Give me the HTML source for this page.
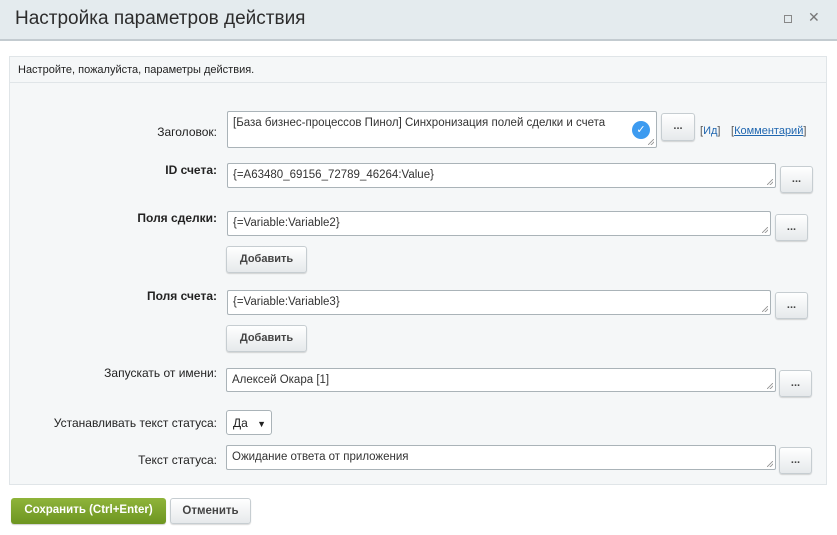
<!DOCTYPE html><html><head><meta charset="utf-8"><style>
*{box-sizing:border-box}
body{margin:0;width:837px;height:535px;background:#fff;font-family:"Liberation Sans",sans-serif;font-size:12px;color:#333;position:relative;overflow:hidden}
.a{position:absolute}
.hd{left:0;top:0;width:837px;height:41px;background:#e4ebee;border-bottom:2px solid #c3cbd0}
.ttl{left:15px;top:8px;font-size:19px;color:#2c2c2c}
.panel{left:9px;top:56px;width:818px;height:429px;background:#f5f7f8;border:1px solid #e0e5e8}
.intro{left:9px;top:56px;width:818px;height:27px;border-bottom:1px solid #e0e5e8;padding:8px 0 0 9px;font-size:11px;color:#222}
.ta{background:#fff;border:1px solid #aab3b8;border-radius:2px;padding:5px 5px;font-size:11.5px;color:#333}
.ta:after{content:"";position:absolute;right:2px;bottom:2px;width:6px;height:6px;background:linear-gradient(135deg,transparent 45%,#999 46%,#999 54%,transparent 55%,transparent 70%,#999 71%,#999 79%,transparent 80%)}
.btn{background:linear-gradient(#fff,#e6e9eb);border:1px solid #c6cdd1;border-radius:3px;box-shadow:0 1px 1px rgba(0,0,0,.15);text-align:center;font-size:11px;font-weight:bold;color:#444}
.lb{width:217px;left:0;text-align:right;font-size:12px;color:#222}
.b{font-weight:bold}
a{color:#2067b0}
</style></head><body>
<div class="a hd"></div>
<div class="a ttl">Настройка параметров действия</div>
<div class="a" style="left:784px;top:15px;width:8px;height:8px;border:1px solid #888"></div>
<div class="a" style="left:808px;top:9px;font-size:14px;color:#777">✕</div>
<div class="a panel"></div>
<div class="a intro">Настройте, пожалуйста, параметры действия.</div>

<div class="a lb" style="top:125px">Заголовок:</div>
<div class="a ta" style="left:227px;top:111px;width:430px;height:37px">[База бизнес-процессов Пинол] Синхронизация полей сделки и счета</div>
<div class="a" style="left:632px;top:121px;width:18px;height:18px;border-radius:50%;background:#3d9bf0;color:#fff;font-size:11px;text-align:center;line-height:18px">✓</div>
<div class="a btn" style="left:661px;top:113px;width:34px;height:28px;line-height:24px">...</div>
<div class="a" style="left:700px;top:125px;font-size:11px;color:#555">[<a>Ид</a>]</div>
<div class="a" style="left:731px;top:125px;font-size:11px;color:#555">[<a style="text-decoration:underline">Комментарий</a>]</div>

<div class="a lb b" style="top:163px">ID счета:</div>
<div class="a ta" style="left:227px;top:163px;width:549px;height:25px">{=A63480_69156_72789_46264:Value}</div>
<div class="a btn" style="left:780px;top:166px;width:33px;height:27px;line-height:24px">...</div>

<div class="a lb b" style="top:211px">Поля сделки:</div>
<div class="a ta" style="left:227px;top:211px;width:544px;height:25px">{=Variable:Variable2}</div>
<div class="a btn" style="left:775px;top:214px;width:33px;height:27px;line-height:24px">...</div>
<div class="a btn" style="left:226px;top:246px;width:81px;height:27px;line-height:25px">Добавить</div>

<div class="a lb b" style="top:289px">Поля счета:</div>
<div class="a ta" style="left:227px;top:290px;width:544px;height:25px">{=Variable:Variable3}</div>
<div class="a btn" style="left:775px;top:292px;width:33px;height:27px;line-height:24px">...</div>
<div class="a btn" style="left:226px;top:325px;width:81px;height:27px;line-height:25px">Добавить</div>

<div class="a lb" style="top:366px">Запускать от имени:</div>
<div class="a ta" style="left:226px;top:368px;width:550px;height:24px">Алексей Окара [1]</div>
<div class="a btn" style="left:779px;top:370px;width:33px;height:27px;line-height:24px">...</div>

<div class="a lb" style="top:416px">Устанавливать текст статуса:</div>
<div class="a" style="left:226px;top:410px;width:46px;height:25px;background:#fff;border:1px solid #aab3b8;border-radius:3px;padding:5px 0 0 6px;font-size:12px;color:#222">Да <span style="font-size:9px;margin-left:6px">▼</span></div>

<div class="a lb" style="top:453px">Текст статуса:</div>
<div class="a ta" style="left:226px;top:445px;width:550px;height:25px">Ожидание ответа от приложения</div>
<div class="a btn" style="left:779px;top:447px;width:33px;height:27px;line-height:24px">...</div>

<div class="a" style="left:11px;top:498px;width:155px;height:26px;background:linear-gradient(#8fb43a,#6d9521);border-radius:3px;box-shadow:0 1px 1px rgba(0,0,0,.2);color:#fff;font-weight:bold;font-size:11.5px;text-align:center;line-height:25px">Сохранить (Ctrl+Enter)</div>
<div class="a btn" style="left:170px;top:498px;width:81px;height:26px;line-height:24px;font-size:11.5px">Отменить</div>
</body></html>
